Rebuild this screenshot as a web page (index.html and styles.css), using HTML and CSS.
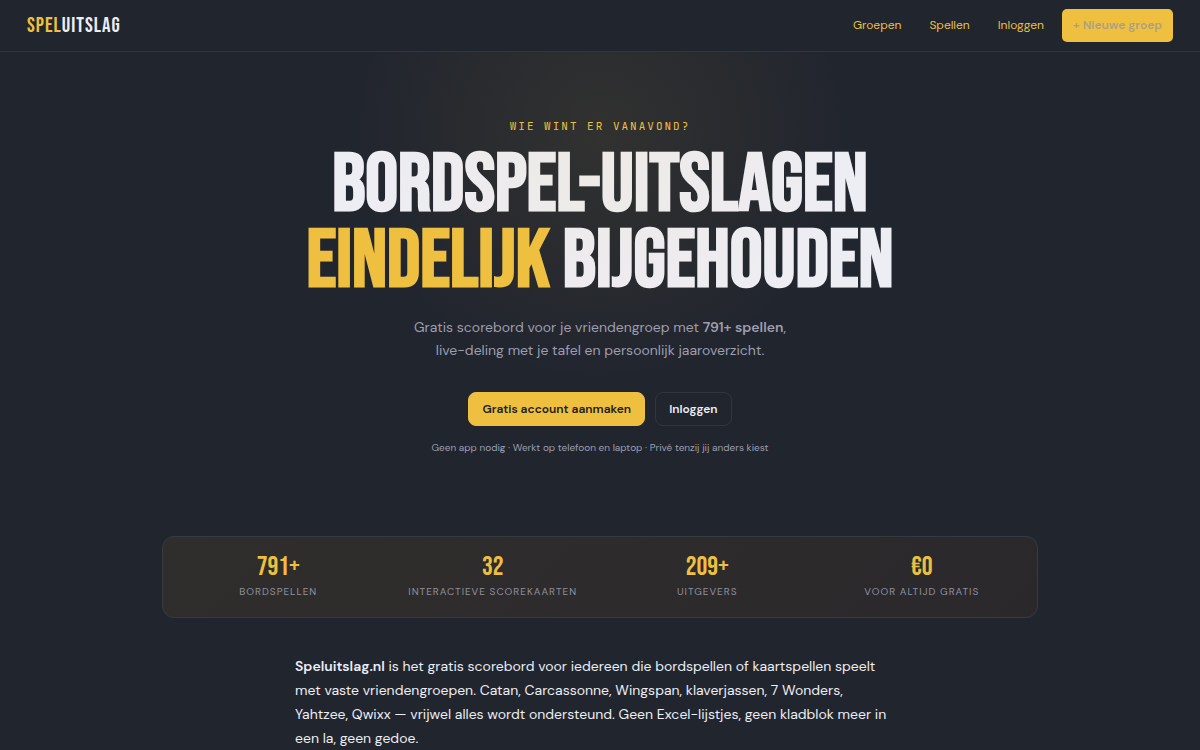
FILE: index.html
```html
<!DOCTYPE html>
<html lang="nl">
<head>
<meta charset="utf-8">
<meta name="viewport" content="width=device-width, initial-scale=1">
<title>Speluitslag</title>
<link rel="stylesheet" href="styles.css">
</head>
<body>
<header class="topbar">
  <a class="logo" href="#"><span class="accent">SPEL</span>UITSLAG</a>
  <nav class="nav">
    <a class="nav-link" href="#">Groepen</a>
    <a class="nav-link" href="#">Spellen</a>
    <a class="nav-link" href="#">Inloggen</a>
    <a class="nav-cta" href="#">+ Nieuwe groep</a>
  </nav>
</header>
<main>
  <section class="hero">
    <p class="eyebrow">WIE WINT ER VANAVOND?</p>
    <h1 class="title">BORDSPEL-UITSLAGEN<br><span class="accent">EINDELIJK</span> BIJGEHOUDEN</h1>
    <p class="lead">Gratis scorebord voor je vriendengroep met <strong>791+ spellen</strong>,<br>live-deling met je tafel en persoonlijk jaaroverzicht.</p>
    <div class="actions">
      <a class="btn btn-primary" href="#">Gratis account aanmaken</a>
      <a class="btn btn-ghost" href="#">Inloggen</a>
    </div>
    <p class="note">Geen app nodig · Werkt op telefoon en laptop · Privé tenzij jij anders kiest</p>
  </section>
  <dl class="stats">
    <div class="stat"><dd class="stat-value">791+</dd><dt class="stat-label">BORDSPELLEN</dt></div>
    <div class="stat"><dd class="stat-value">32</dd><dt class="stat-label">INTERACTIEVE SCOREKAARTEN</dt></div>
    <div class="stat"><dd class="stat-value">209+</dd><dt class="stat-label">UITGEVERS</dt></div>
    <div class="stat"><dd class="stat-value">€0</dd><dt class="stat-label">VOOR ALTIJD GRATIS</dt></div>
  </dl>
  <p class="intro"><strong>Speluitslag.nl</strong> is het gratis scorebord voor iedereen die bordspellen of kaartspellen speelt met vaste vriendengroepen. Catan, Carcassonne, Wingspan, klaverjassen, 7 Wonders, Yahtzee, Qwixx — vrijwel alles wordt ondersteund. Geen Excel-lijstjes, geen kladblok meer in een la, geen gedoe.</p>
</main>
</body>
</html>
```
FILE: styles.css
```css
:root {
  --bg: #21252e;
  --line: #31353e;
  --gold: #efc040;
  --text: #ededf4;
  --muted: #9c9eb0;
  --display: "Bebas Neue", "Liberation Sans Narrow", sans-serif;
  --body: "DM Sans", Inter, "Liberation Sans", sans-serif;
}
* { box-sizing: border-box; }
html { background: var(--bg); }
body {
  margin: 0;
  color: var(--text);
  font: 14px/24px var(--body);
  overflow-x: hidden;
}
p, h1, dl, dd { margin: 0; }
a { color: inherit; text-decoration: none; }
strong { font-weight: 600; }
.accent { color: var(--gold); }

.topbar {
  display: flex;
  align-items: center;
  justify-content: space-between;
  padding: 9px 27px;
  border-bottom: 1px solid var(--line);
}
.logo { font: 400 21px/33px var(--display); letter-spacing: 1px; }
.nav { display: flex; align-items: center; font-size: 12px; line-height: 17px; }
.nav-link { padding: 8px 14px; color: var(--gold); }
.nav-cta {
  margin-left: 4px;
  padding: 8px 11px;
  border-radius: 5px;
  background: var(--gold);
  color: #aba086;
  font-weight: 600;
}

.hero {
  position: relative;
  display: flex;
  flex-direction: column;
  align-items: center;
  padding: 66px 20px 80px;
  text-align: center;
}
/* soft golden glow laid over the headline */
.hero::after {
  content: "";
  position: absolute;
  inset: 0;
  background: radial-gradient(circle 250px at 50% 80px, #efc04014, transparent);
  pointer-events: none;
}
.eyebrow {
  font: 11px/16px "JetBrains Mono", "Liberation Mono", monospace;
  letter-spacing: 2px;
  color: var(--gold);
}
.title {
  padding-top: 14px;
  font: 700 82px/76px var(--display);
}
.lead { padding-top: 16px; font-size: 14px; line-height: 23px; color: var(--muted); }
.actions { display: flex; gap: 10px; padding-top: 30px; }
.btn {
  padding: 7px 13px;
  border: 1px solid var(--line);
  border-radius: 8px;
  font-size: 12px;
  line-height: 18px;
  font-weight: 600;
}
.btn-primary { background: var(--gold); border-color: var(--gold); color: #21201c; }
.note { padding-top: 14px; font-size: 10px; line-height: 16px; color: var(--muted); }

.stats {
  display: grid;
  grid-template-columns: repeat(4, 1fr);
  gap: 14px;
  max-width: 876px;
  margin: 0 auto;
  padding: 15px 15px 18px;
  border: 1px solid #373a42;
  border-radius: 12px;
  background: linear-gradient(135deg, #2f2e2b, #2b282c);
  text-align: center;
}
.stat { display: flex; flex-direction: column; }
.stat-value { font: 400 27px/30px var(--display); color: var(--gold); }
.stat-label { padding-top: 2px; font-size: 10px; line-height: 15px; letter-spacing: 1px; color: #8f90a0; }

.intro { max-width: 610px; margin: 0 auto; padding: 36px 10px 40px 0; }
```
